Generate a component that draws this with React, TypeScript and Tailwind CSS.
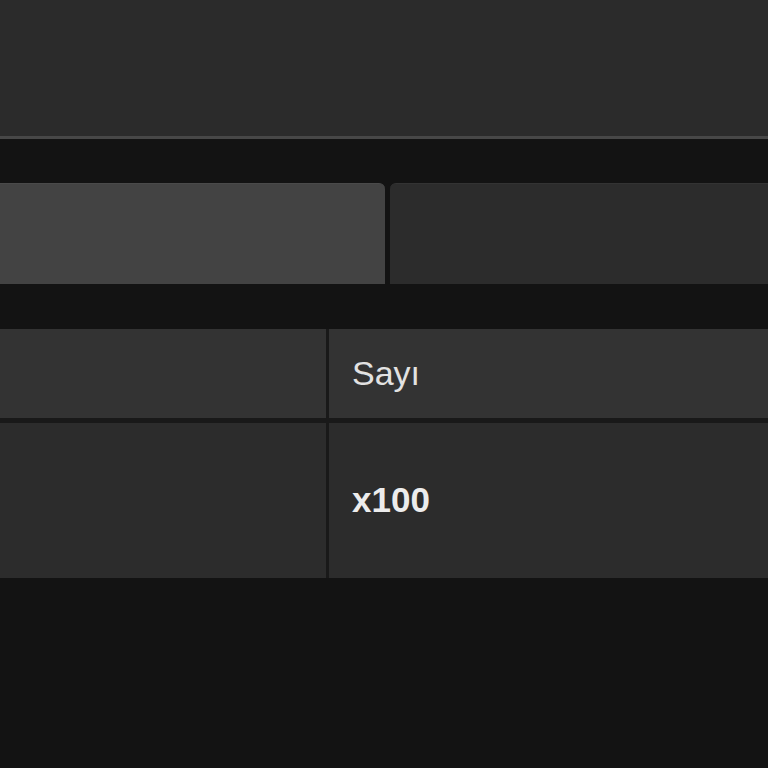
export default function App() {
  return (
    <div className="w-[768px] h-[768px] overflow-hidden bg-[#131313] font-['Liberation_Sans',Arial,sans-serif]">
      {/* Top panel */}
      <div className="h-[139px] bg-[#2b2b2b] border-b-[3px] border-[#474747]" />

      {/* Tabs */}
      <div className="mt-[44px] flex gap-[5px] h-[101px]">
        <div className="w-[385px] bg-[#434343] rounded-tr-[6px] border-t border-[#4a4a4a]" />
        <div className="flex-1 bg-[#2c2c2c] rounded-tl-[6px] border-t border-[#333]" />
      </div>

      {/* Table */}
      <div className="mt-[45px] grid grid-cols-[326px_1fr] gap-x-[3px] gap-y-[5px] bg-[#191919]">
        <div className="h-[89px] bg-[#333333]" />
        <div className="h-[89px] bg-[#333333] flex items-center pl-[23px] text-[34px] text-[#e2e2e2]">
          Sayı
        </div>
        <div className="h-[155px] bg-[#2c2c2c]" />
        <div className="h-[155px] bg-[#2c2c2c] flex items-center pl-[23px] text-[35px] font-bold text-[#ececec]">
          x100
        </div>
      </div>
    </div>
  );
}
